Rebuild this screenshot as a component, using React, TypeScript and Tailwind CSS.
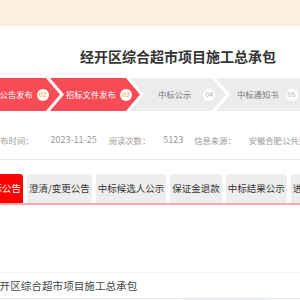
import React from 'react';

const font = { fontFamily: '"Noto Sans CJK SC", "Noto Sans", sans-serif' };

const App = () => {
  const tabs = ['澄清/变更公告', '中标候选人公示', '保证金退款', '中标结果公示', '进场交易'];

  return (
    <div className="w-[300px] h-[300px] overflow-hidden bg-white" style={font}>
      {/* top band */}
      <div className="h-[26px] bg-[#fbefe1]" />

      {/* title */}
      <div className="mt-[20px] ml-[80px] whitespace-nowrap text-[14px] leading-[20px] font-bold text-[#333]">
        经开区综合超市项目施工总承包
      </div>

      {/* steps */}
      <div className="mt-[12px] flex h-[33px] whitespace-nowrap">
        <div className="ml-[-30px] w-[90px] shrink-0 flex items-center pl-[13px] bg-[#f94b56] [clip-path:polygon(0_0,calc(100%_-_14px)_0,100%_50%,calc(100%_-_14px)_100%,0_100%)]">
          <span className="text-[8.3px] text-white">招标公告发布</span>
          <span className="ml-[4px] w-[12px] h-[12px] rounded-full bg-white flex items-center justify-center text-[7px] text-[#f5a623]">02</span>
        </div>
        <div className="ml-[-10px] w-[90px] shrink-0 flex items-center pl-[16px] bg-[#f94b56] [clip-path:polygon(0_0,calc(100%_-_14px)_0,100%_50%,calc(100%_-_14px)_100%,0_100%,14px_50%)]">
          <span className="text-[8.3px] text-white">招标文件发布</span>
          <span className="ml-[4px] w-[12px] h-[12px] rounded-full bg-white flex items-center justify-center text-[7px] text-[#f5a623]">03</span>
        </div>
        <div className="ml-[-10px] w-[96px] shrink-0 flex items-center pl-[28px] bg-[#ececec] [clip-path:polygon(0_0,calc(100%_-_14px)_0,100%_50%,calc(100%_-_14px)_100%,0_100%,14px_50%)]">
          <span className="text-[8.3px] text-[#777]">中标公示</span>
          <span className="ml-[12px] w-[12px] h-[12px] rounded-full bg-white flex items-center justify-center text-[7px] text-[#aaa]">04</span>
        </div>
        <div className="ml-[-10px] w-[100px] shrink-0 flex items-center pl-[21px] bg-[#ececec] [clip-path:polygon(0_0,calc(100%_-_14px)_0,100%_50%,calc(100%_-_14px)_100%,0_100%,14px_50%)]">
          <span className="text-[8.3px] text-[#777]">中标通知书</span>
          <span className="ml-[7px] w-[12px] h-[12px] rounded-full bg-white flex items-center justify-center text-[7px] text-[#aaa]">05</span>
        </div>
      </div>

      {/* info row */}
      <div className="mt-[23px] ml-[-8px] flex items-center h-[12px] whitespace-nowrap text-[8.3px] text-[#999]">
        <span>发布时间：</span>
        <span className="ml-[17px] text-[9px]">2023-11-25</span>
        <span className="ml-[12px]">阅读次数：</span>
        <span className="ml-[13px] text-[9px]">5123</span>
        <span className="ml-[11px]">信息来源：</span>
        <span className="ml-[13px]">安徽合肥公共资源交易中心</span>
      </div>
      <div className="mt-[13px] h-px bg-[#e8e8e8]" />

      {/* tabs */}
      <div className="mt-[14px] ml-[-19px] flex gap-[4px] h-[29px] whitespace-nowrap text-[9.5px]">
        <div className="shrink-0 flex items-center px-[2px] rounded-t-[3px] bg-[#fe0000] text-white">招标公告</div>
        {tabs.map((t, i) => (
          <div key={i} className="shrink-0 flex items-center px-[2px] rounded-t-[3px] bg-[#eeeeee] text-[#333]">
            {t}
          </div>
        ))}
      </div>
      <div className="h-[2px] bg-[#f7aaaa]" />

      {/* list */}
      <div className="mt-[67px] h-px bg-[#eef1f4]" />
      <div className="ml-[-11px] h-[25px] flex items-center whitespace-nowrap text-[10.6px] text-[#444]">
        经开区综合超市项目施工总承包
      </div>
      <div className="h-px bg-[#e6e6e6]" />
      <div className="ml-[183px] w-[87px] h-[10px] bg-[#eef4fb]" />
    </div>
  );
};

export default App;
